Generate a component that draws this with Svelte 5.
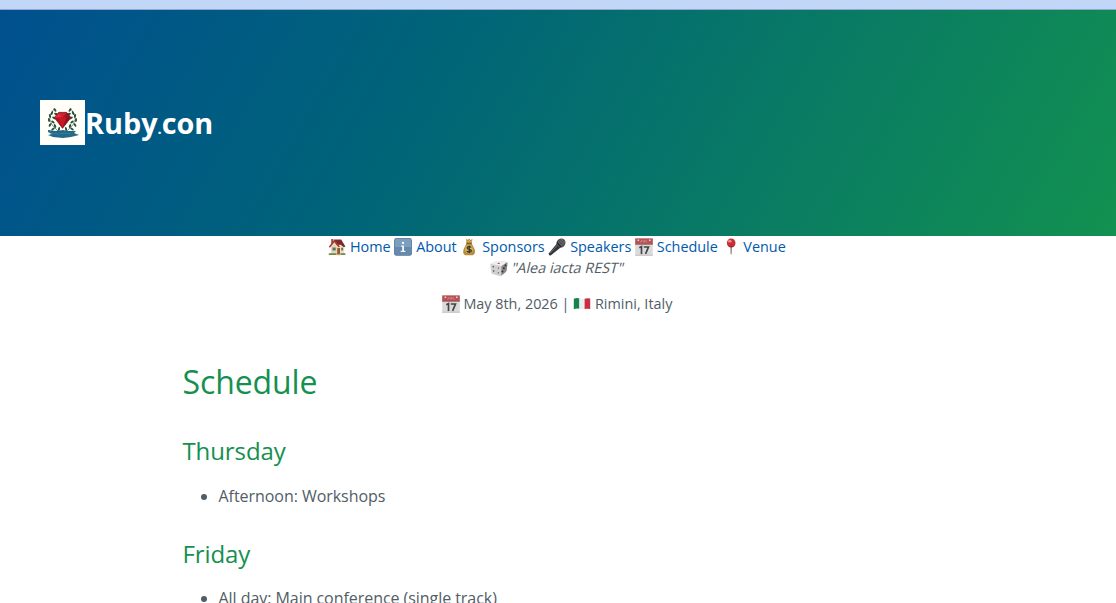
<script>
  const links = [
    { icon: 'house', label: 'Home' },
    { icon: 'info', label: 'About' },
    { icon: 'bag', label: 'Sponsors' },
    { icon: 'mic', label: 'Speakers' },
    { icon: 'calendar', label: 'Schedule' },
    { icon: 'pin', label: 'Venue' }
  ];
  const days = [
    { name: 'Thursday', items: ['Afternoon: Workshops'] },
    { name: 'Friday', items: ['All day: Main conference (single track)'] }
  ];
  const leaves = [
    [15, 10, -35], [12, 13, 20], [16, 14, -65], [10, 16, -15], [14, 18, -60],
    [9, 20, -5], [13, 22, -50], [10, 25, 30], [15, 26, -25], [13, 29, 55], [19, 29, 15]
  ];
</script>

{#snippet emoji(kind)}
  <svg class="emoji" viewBox="0 0 18 18" aria-hidden="true">
    {#if kind === 'house'}
      <path d="M3.2 1h2.2v5H3.2z" fill="#8c5546" />
      <path d="M3 8.2 6.5 4l6.5.4 3.2 4.2v7.6H3z" fill="#f0dfbc" />
      <path d="M6.2 1.6h7L17.4 8.6l-1.5.6-3.2-2.4L8.5 7z" fill="#7e2a2c" />
      <path d="m.8 8.8 5.6-7.2 5.4 7-1.2 1-4.3-5.4L2 9.8z" fill="#a63835" />
      <path d="m3 9.4 3.3-4.7 4.2 5.2v6.3H3z" fill="#ecd6ad" />
      <path d="M4.5 9.5h3.2v3H4.5zM13.2 9.8h1.9v2.7h-1.9z" fill="#4a7592" />
      <path d="M9.2 10h2.8v6.5H9.2z" fill="#965733" />
      <path d="M.8 15.2h7.7V17H.8zM12.5 15.2h4.9V17h-4.9z" fill="#77854d" />
      <path d="M8.5 16.2h4v1h-4z" fill="#bba28a" />
    {:else if kind === 'info'}
      <rect x=".1" y=".1" width="17.8" height="17.7" rx="2.4" fill="#4e7398" />
      <rect x=".8" y=".6" width="16.4" height="16.2" rx="2" fill="#7c9fbe" />
      <path d="M.8 9h16.4v5.3q0 2.5-2.5 2.5H3.3Q.8 16.8.8 14.3z" fill="#658aad" />
      <circle cx="9" cy="4.9" r="1.15" fill="#fff" />
      <path d="M7 7.4h3v5.4h1.4V14H6.7v-1.2h1.5V8.6H7z" fill="#f2f5f8" />
    {:else if kind === 'bag'}
      <path d="M6 .8 8 2l1-1.5L10.5 2l2-1-1 4 3 6q1.7 5-2 6.3h-7Q2 16 3.7 11l3-6z" fill="#b88a3a" />
      <path d="M6.7 1.5 8 5.2h3l1-3.4-1.6 1.5-1.3-1.5-1 1.4z" fill="#d5ad60" />
      <path d="M6.3 5.2h5.5" stroke="#80531f" stroke-width="1.2" />
      <ellipse cx="9" cy="11.3" rx="3.8" ry="4.3" fill="#d6b55b" />
      <path d="M11.2 9.5C10.4 8.4 7.1 8.1 7.1 9.9c0 1.9 4.3 1 4.3 2.9 0 1.8-3.6 1.7-4.7.3M9.2 7.5v7.8" fill="none" stroke="#343126" stroke-width="1.15" />
    {:else if kind === 'mic'}
      <path d="m8.9 5.5 4 3.8L3 17.2Q.5 18 .7 15.4z" fill="#343638" />
      <path d="m9.6 7-7.5 8.2" stroke="#77797b" stroke-width=".8" />
      <ellipse cx="13" cy="5" rx="4.3" ry="4.8" transform="rotate(42 13 5)" fill="#4c4e50" />
      <path d="m10 4 4.5 4.5M11.5 2.3l5 5M13 1l4 4M10.2 6l5-5M12 8l5-5" stroke="#8a8c8c" stroke-width=".35" />
      <path d="m9 4.5 4.4 4.7" stroke="#222426" stroke-width="1.1" />
    {:else if kind === 'calendar'}
      <path d="M.2.4h17.6v17.2H.2z" fill="#dadada" />
      <path d="M.2.4h17.6v6H.2z" fill="#b65356" />
      <path d="M.2 5.8h17.6v.7H.2z" fill="#984d4f" />
      <path d="M2.6 1.5h1.5V3H2.6zM14 1.5h1.5V3H14z" fill="#ead7d7" />
      <path d="M6.3 2v2H5M8 2v2h1.7V2M11 2v2h1.2" fill="none" stroke="#dca4a5" stroke-width=".5" />
      <path d="m4.3 9.7 2.2-1.1v7.3M8.8 9h4.7l-2.9 6.9" fill="none" stroke="#444" stroke-width="1.65" />
      <path d="M.2 17.2h17.6" stroke="#b8b8b8" stroke-width=".8" />
    {:else if kind === 'pin'}
      <path d="M8.4 8h1.5l-.2 7.7-.5 1-.6-1z" fill="#8e7775" />
      <circle cx="9.2" cy="4.9" r="4.3" fill="#c82f34" />
      <path d="M5.3 7q3.9 2.7 7.8 0-1.6 2.6-3.9 2.6T5.3 7z" fill="#9f2229" />
      <ellipse cx="7.8" cy="3.3" rx="1.8" ry="1.3" fill="#f19090" />
    {:else if kind === 'die'}
      <path d="M.4 6.4q0-1.2 1.2-1.8l4.7-2.4q.9-.4 1.9-.3l8 .8q1.4.2 1.4 1.5l-.8 6.8q-.1 1.1-1 1.9l-4.2 3.7q-1 .8-2 .5l-7-2q-1.1-.3-1.2-1.4z" fill="#d0d0d0" />
      <path d="m1.1 5 5.2-2.8q.9-.4 1.9-.3l8.5 1-5.2 4.2z" fill="#f0f0f0" />
      <path d="m11.4 7.2 5.8-4 .2 1-.7 6.8q-.1 1.1-1 1.9l-4.3 3.8z" fill="#888" />
      <ellipse cx="8.7" cy="4.3" rx="1.3" ry=".6" fill="#a34c49" />
      <g fill="#333">
        <circle cx="3.2" cy="7.8" r=".7" /><circle cx="8.5" cy="9" r=".6" />
        <circle cx="3.7" cy="12" r=".7" /><circle cx="8.3" cy="13.8" r=".6" />
        <circle cx="15.5" cy="6.4" r="1" /><circle cx="13.9" cy="9.3" r="1" /><circle cx="12.4" cy="12.5" r="1" />
      </g>
    {:else}
      <path d="M.8 3.8q3-1.2 5.7-.3v10.3q-2.7-.8-5.7.4z" fill="#16834b" />
      <path d="M6.3 3.4q2.5.8 5.4.3V14q-2.9.6-5.4-.3z" fill="#eee" />
      <path d="M11.6 3.8q2.8-1 5.6-.2v10.5q-2.8-.8-5.6 0z" fill="#c62f44" />
    {/if}
  </svg>
{/snippet}

<div class="topbar"></div>
<header>
  <a class="brand" href="#home">
    <svg class="logo" viewBox="0 0 45 45" aria-hidden="true">
      <path fill="#fffef8" d="M0 0h45v45H0z" />
      {#each [false, true] as mirrored}
        <g transform={mirrored ? 'translate(45 0) scale(-1 1)' : undefined} fill="#254e35">
          <path d="M15 8Q3 19 18 31" fill="none" stroke="#254e35" stroke-width=".6" />
          {#each leaves as [x, y, turn]}
            <ellipse cx={x} cy={y} rx="1" ry="2" transform={`rotate(${turn} ${x} ${y})`} />
          {/each}
        </g>
      {/each}
      <path d="m8 30 8 1 7-1 5 1h8l-2 2 5 2-8 2-8 1-10-1-5-2 4-1-4-2z" fill="#236989" />
      <path d="m10 33 8 1 7-1 6 1" fill="none" stroke="#4c879f" stroke-width=".6" />
      <path d="m14.4 17.5 4.2-5.1h8l4.3 5.1-8.4 10.8z" fill="#b90f20" stroke="#69131d" stroke-width=".8" />
      <path d="m14.8 17.5 4-4.5 3.7 4.5z" fill="#dd343c" />
      <path d="m18.8 13 3.7 4.5 3.7-4.5z" fill="#cf222d" />
      <path d="m18.5 17.5 4 10.5 4-10.5z" fill="#c81825" />
      <path d="m26.2 13 4.1 4.5-7.6 10.3 3.8-10.3z" fill="#8e1420" />
    </svg><span class="wordmark">Ruby<span class="dot">.</span>con</span>
  </a>
</header>
<nav>
  {#each links as link}
    <a href={`#${link.label.toLowerCase()}`}>{@render emoji(link.icon)}<span>{link.label}</span></a>
  {/each}
</nav>
<p class="motto">{@render emoji('die')}<em>"Alea iacta REST"</em></p>
<p class="event">{@render emoji('calendar')}<span>May 8th, 2026 |</span>{@render emoji('flag')}<span>Rimini, Italy</span></p>
<main>
  <h1>Schedule</h1>
  {#each days as day}
    <h2>{day.name}</h2>
    <ul>{#each day.items as item}<li>{item}</li>{/each}</ul>
  {/each}
</main>

<style>
  :global(body) { margin: 0; height: 603px; overflow: hidden; background: #fff; color: #515d66; font-family: "Open Sans", "Noto Sans", sans-serif; }
  .topbar { box-sizing: border-box; height: 10px; background: #c2d7f7; border-bottom: 1px solid #8fa8cc; }
  header { box-sizing: border-box; height: 226px; padding: 90px 40px; background: linear-gradient(120deg, #00508f 0%, #006478 37%, #129150 100%); }
  .brand { display: flex; width: max-content; color: #fff; text-decoration: none; }
  .logo { display: block; width: 45px; height: 45px; }
  .wordmark { font-size: 28.8px; line-height: 46px; font-weight: 700; }
  .dot { font-size: 14.4px; }
  nav, .motto, .event { display: flex; justify-content: center; margin: 0; padding-right: 2px; font-size: 14.4px; line-height: 21px; }
  nav { gap: 3.75px; height: 21px; }
  nav a { display: flex; align-items: center; gap: 3.75px; color: #0059ad; text-decoration: none; }
  .motto, .event { align-items: center; gap: 3.75px; }
  .motto em { font-style: normal; transform: skewX(-14deg); }
  .event { margin-top: 15px; }
  .emoji { width: 18px; height: 18px; flex: none; }
  main { box-sizing: border-box; width: 751px; margin: 49px auto 0; }
  h1, h2 { color: #159050; font-weight: 400; margin: 0; letter-spacing: -.1px; }
  h1 { font-size: 32px; line-height: 38px; margin-bottom: 35px; }
  h2 { font-size: 24px; line-height: 29px; }
  ul { margin: 18px 0 30px; padding-left: 36px; font-size: 16px; line-height: 26px; letter-spacing: -.05px; }
  ul:last-child { margin-top: 17px; margin-bottom: 0; }
</style>
